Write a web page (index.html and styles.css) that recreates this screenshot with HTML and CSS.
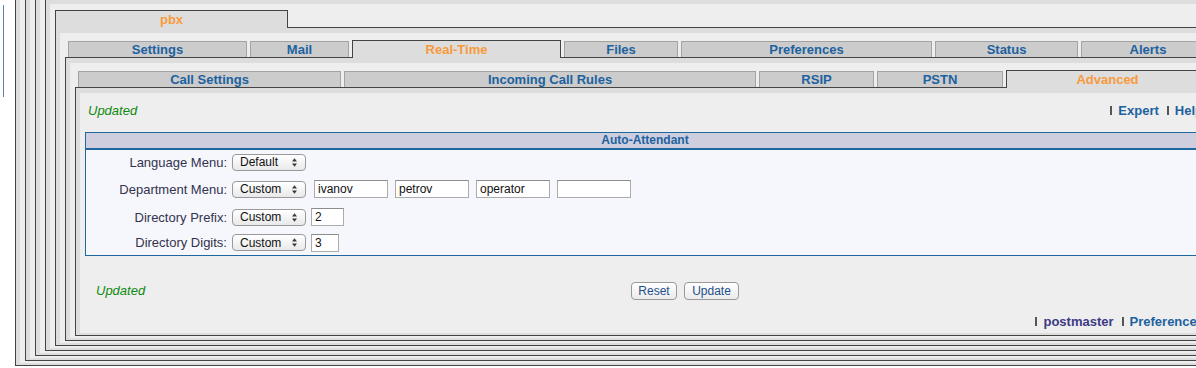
FILE: index.html
```html
<html>
<head>
  <title>pbx - Real-Time - Advanced</title>
  <link rel="stylesheet" href="styles.css">
</head>
<body>
  <div class="edge"></div>
  <div class="stack">
    <div class="frame"><div class="pane">
    <div class="frame"><div class="pane">
    <div class="frame"><div class="pane">
    <div class="frame"><div class="pane first">

      <div class="tabs root">
        <div class="tab on t-pbx">pbx</div>
      </div>
      <div class="frame body"><div class="pane">

        <div class="tabs">
          <div class="tab t-settings">Settings</div>
          <div class="tab t-mail">Mail</div>
          <div class="tab on t-realtime">Real-Time</div>
          <div class="tab t-files">Files</div>
          <div class="tab t-prefs">Preferences</div>
          <div class="tab t-status">Status</div>
          <div class="tab t-alerts">Alerts</div>
        </div>
        <div class="frame body"><div class="pane">

          <div class="tabs">
            <div class="tab t-call">Call Settings</div>
            <div class="tab t-rules">Incoming Call Rules</div>
            <div class="tab t-rsip">RSIP</div>
            <div class="tab t-pstn">PSTN</div>
            <div class="tab on t-adv">Advanced</div>
          </div>
          <div class="frame body"><div class="pane">

            <div class="topline">
              <span class="note">Updated</span>
              <span class="links">
                <i class="sep"></i><a href="#">Expert</a>
                <i class="sep"></i><a href="#">Help</a>
              </span>
            </div>

            <div class="aa">
              <div class="aa-head">Auto-Attendant</div>
              <div class="aa-row">
                <span class="aa-label">Language Menu:</span>
                <label class="select">
                  <select><option>Default</option><option>Custom</option></select>
                  <svg width="5" height="9" viewBox="0 0 5 9"><path d="M0 3.6L2.5 0.2L5 3.6Z M0 5.4L2.5 8.8L5 5.4Z" fill="#3a3a3a"/></svg>
                </label>
              </div>
              <div class="aa-row dept">
                <span class="aa-label">Department Menu:</span>
                <label class="select">
                  <select><option>Custom</option><option>Default</option></select>
                  <svg width="5" height="9" viewBox="0 0 5 9"><path d="M0 3.6L2.5 0.2L5 3.6Z M0 5.4L2.5 8.8L5 5.4Z" fill="#3a3a3a"/></svg>
                </label>
                <input type="text" value="ivanov">
                <input type="text" value="petrov">
                <input type="text" value="operator">
                <input type="text" value="">
              </div>
              <div class="aa-row">
                <span class="aa-label">Directory Prefix:</span>
                <label class="select">
                  <select><option>Custom</option><option>Default</option></select>
                  <svg width="5" height="9" viewBox="0 0 5 9"><path d="M0 3.6L2.5 0.2L5 3.6Z M0 5.4L2.5 8.8L5 5.4Z" fill="#3a3a3a"/></svg>
                </label>
                <input type="text" class="short prefix" value="2">
              </div>
              <div class="aa-row">
                <span class="aa-label">Directory Digits:</span>
                <label class="select">
                  <select><option>Custom</option><option>Default</option></select>
                  <svg width="5" height="9" viewBox="0 0 5 9"><path d="M0 3.6L2.5 0.2L5 3.6Z M0 5.4L2.5 8.8L5 5.4Z" fill="#3a3a3a"/></svg>
                </label>
                <input type="text" class="short digits" value="3">
              </div>
            </div>

            <div class="actions">
              <span class="note">Updated</span>
              <button>Reset</button>
              <button class="wide">Update</button>
            </div>

            <div class="footer">
              <i class="sep"></i><a href="#" class="user">postmaster</a>
              <i class="sep"></i><a href="#">Preferences</a>
            </div>

          </div></div>
        </div></div>
      </div></div>

    </div></div>
    </div></div>
    </div></div>
    </div></div>
  </div>
</body>
</html>
```

FILE: styles.css
```css
body {
  margin: 0;
  height: 368px;
  overflow: hidden;
  background: #fff;
  display: flex;
  align-items: flex-start;
  font: 13px "Liberation Sans", Arial, Helvetica, sans-serif;
}
.edge {
  flex-shrink: 0;
  width: 1px;
  height: 92px;
  margin: 5px 11px 0 3px;
  background: #5b7fb2;
}
.stack {
  flex-shrink: 0;
  width: 1260px;
  margin-top: -37px;
}

/* nested frames */
.frame {
  border: 1px solid #444;
  background: #ddd;
  padding: 4px 4px 2px;
}
.frame.body {
  border-top: 0;
  padding-top: 5px;
}
.pane {
  background: #eee;
  padding: 7px 5px 2px;
}
.pane.first {
  padding-top: 6px;
}

/* tabs */
.tabs {
  display: flex;
  align-items: flex-end;
  gap: 3px;
  padding: 0 3px;
  border-bottom: 1px solid #444;
}
.tabs.root {
  padding: 0;
}
.tab {
  flex-shrink: 0;
  box-sizing: border-box;
  height: 16px;
  line-height: 15px;
  border: 1px solid #a3a3a3;
  border-bottom: 0;
  background: #ccc;
  text-align: center;
  font-weight: bold;
  color: #1c62a0;
}
.tab.on {
  height: 18px;
  line-height: 17px;
  margin-bottom: -1px;
  border-color: #444;
  background: #ddd;
  color: #f89a3c;
}
.t-pbx { width: 233px; }
.t-settings { width: 179px; }
.t-mail { width: 99px; }
.t-realtime { width: 209px; }
.t-files { width: 114px; }
.t-prefs { width: 251px; }
.t-status { width: 143px; }
.t-alerts { width: 134px; }
.t-call { width: 263px; }
.t-rules { width: 412px; }
.t-rsip { width: 115px; }
.t-pstn { width: 126px; }
.t-adv { width: 203px; }

/* content */
a {
  color: #1c62a0;
  text-decoration: none;
  font-weight: bold;
}
.note {
  color: #108a10;
  font-style: italic;
}
.topline {
  display: flex;
  justify-content: space-between;
  align-items: center;
  height: 20px;
  padding: 0 2px 0 3px;
}
.links,
.footer {
  display: flex;
  align-items: center;
}
.sep {
  display: inline-block;
  width: 2px;
  height: 9px;
  margin: 0 6px 0 8px;
  background: #555;
}

.aa {
  margin-top: 12px;
  border: 1px solid #1f679f;
  background: #f6f7fc;
}
.aa-head {
  height: 15px;
  line-height: 15px;
  background: #cecedf;
  border-bottom: 2px solid #1f679f;
  text-align: center;
  font-size: 12px;
  font-weight: bold;
  color: #1c62a0;
}
.aa-row {
  display: flex;
  align-items: center;
  height: 26px;
}
.aa-row:nth-child(2) { height: 24px; }
.aa-row:nth-child(3) { height: 30px; }
.aa-row:nth-child(5) { height: 25px; }
.aa-label {
  width: 141px;
  text-align: right;
  color: #33334d;
}
.select {
  display: inline-flex;
  align-items: center;
  box-sizing: border-box;
  width: 74px;
  height: 17px;
  margin-left: 5px;
  padding: 0 8px 0 7px;
  border: 1px solid #999;
  border-radius: 4px;
  background: linear-gradient(#fff, #e9e9e9);
}
.select select {
  flex: 1;
  min-width: 0;
  -webkit-appearance: none;
  appearance: none;
  border: 0;
  padding: 0;
  margin: 0;
  background: transparent;
  font: 12px "Liberation Sans", Arial, sans-serif;
  color: #111;
}
input[type=text] {
  box-sizing: border-box;
  width: 74px;
  height: 18px;
  margin: 0 0 0 7px;
  padding: 0 3px;
  border: 1px solid #ababab;
  border-top-color: #8c8c8c;
  background: #fff;
  font: 12px "Liberation Sans", Arial, sans-serif;
  color: #111;
}
.dept .select + input {
  margin-left: 8px;
}
input.short {
  margin-left: 5px;
}
input.prefix { width: 33px; }
input.digits { width: 28px; }

.actions {
  display: flex;
  align-items: center;
  height: 21px;
  margin-top: 24px;
}
.actions .note {
  box-sizing: border-box;
  width: 546px;
  padding-left: 11px;
}
button {
  box-sizing: border-box;
  width: 46px;
  height: 18px;
  margin-right: 7px;
  padding: 0;
  border: 1px solid #999;
  border-radius: 4px;
  background: linear-gradient(#fff, #ebebeb);
  font: 12px "Liberation Sans", Arial, sans-serif;
  color: #1d4f8c;
}
button.wide {
  width: 55px;
}
.footer {
  justify-content: flex-end;
  height: 20px;
  margin-top: 10px;
  padding-right: 1px;
}
.footer .user {
  color: #3d3a86;
}
```
